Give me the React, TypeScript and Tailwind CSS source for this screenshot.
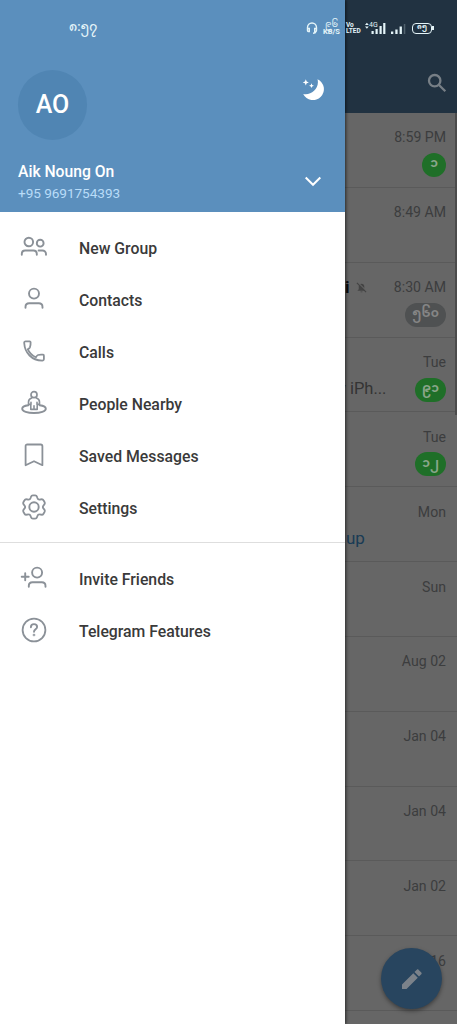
import type { ReactNode } from "react";

interface IconProps {
  children: ReactNode;
}

function MenuIcon({ children }: IconProps) {
  return (
    <svg
      className="h-7 w-7 shrink-0"
      viewBox="0 0 28 28"
      fill="none"
      stroke="#8b9198"
      strokeWidth={1.9}
      strokeLinecap="round"
      strokeLinejoin="round"
    >
      {children}
    </svg>
  );
}

const mainItems = [
  {
    label: "New Group",
    icon: (
      <>
        <circle cx="8.8" cy="9" r="4.3" />
        <circle cx="20.2" cy="10.2" r="3.4" />
        <path d="M1.8 21.800v-.8c0-2.100 1.400-3.500 3.400-3.500h8.200c2 0 3.400 1.400 3.400 3.500v.8M18.600 17.500h3.800c2 0 3.600 1.500 3.600 3.500v.8" />
      </>
    ),
  },
  {
    label: "Contacts",
    icon: (
      <>
        <circle cx="14" cy="8.6" r="5" />
        <path d="M5.500 22.800v-.8c0-2.200 1.500-3.700 3.700-3.700h9.600c2.200 0 3.700 1.500 3.700 3.700v.8" />
      </>
    ),
  },
  {
    label: "Calls",
    icon: (
      <path
        d="M5.700 4.300h3.900c.6 0 1 .4 1 1 .1 1.900-.1 3.500-.7 5-.3.700-1 1.300-2.100 2 1.900 3.900 4.300 6.200 8.100 8 .7-1.200 1.300-2 2.100-2.300 1.500-.5 3.200-.5 5-.3.600.1.900.5.900 1v3.200c0 1.100-.7 1.800-1.800 1.700C11.800 23.300 4.900 16.200 4.200 6c-.1-1 .5-1.700 1.500-1.700z"
        strokeWidth={1.8}
      />
    ),
  },
  {
    label: "People Nearby",
    icon: (
      <>
        <circle cx="14" cy="5.7" r="3" strokeWidth={1.7} />
        <path
          d="M11.700 8.900c-1.900.5-3.200 2-3.200 4v2.500h2.300v5h6.400v-5h2.300v-2.500c0-2-1.300-3.500-3.200-4M11 15.400v-2.200M17 15.400v-2.200M14 16.800v3.600"
          strokeWidth={1.6}
        />
        <path d="M8.300 16.300c-3.700.5-6.100 1.700-6.100 3.400 0 2.600 5.300 4.300 11.800 4.300s11.800-1.700 11.800-4.300c0-1.700-2.400-2.900-6.100-3.400" />
      </>
    ),
  },
  {
    label: "Saved Messages",
    icon: (
      <path
        d="M7.300 3.500h13.400c1 0 1.700.7 1.700 1.700v19L14 20.200l-8.400 4v-19c0-1 .7-1.700 1.700-1.700z"
        strokeWidth={1.8}
      />
    ),
  },
  {
    label: "Settings",
    icon: (
      <>
        <circle cx="14" cy="14" r="4.7" />
        <path
          d="M10.900 4c.3-1 1-1.600 2-1.600h2.200c1 0 1.700.6 2 1.600l.3 1c.4 1.200 1.500 1.800 2.700 1.500l1-.2c1-.2 1.900.1 2.400 1l1 1.700c.5.900.4 1.800-.3 2.600l-.6.700c-.8.900-.8 2.500 0 3.400l.6.700c.7.800.8 1.700.3 2.600l-1 1.700c-.5.900-1.400 1.200-2.400 1l-1-.2c-1.200-.3-2.300.3-2.700 1.500l-.3 1c-.3 1-1 1.600-2 1.600h-2.200c-1 0-1.700-.6-2-1.600l-.3-1c-.4-1.200-1.500-1.800-2.700-1.500l-1 .2c-1 .2-1.900-.1-2.400-1l-1-1.700c-.5-.9-.4-1.800.3-2.600l.6-.7c.8-.9.8-2.500 0-3.400l-.6-.7c-.7-.8-.8-1.700-.3-2.600l1-1.700c.5-.9 1.400-1.200 2.400-1l1 .2c1.200.3 2.300-.3 2.700-1.500z"
          strokeWidth={1.8}
        />
      </>
    ),
  },
];

const extraItems = [
  {
    label: "Invite Friends",
    icon: (
      <>
        <circle cx="17.1" cy="8.6" r="5" />
        <path d="M8.800 22.800v-.8c0-2.200 1.500-3.700 3.700-3.700h9.300c2.200 0 3.700 1.500 3.700 3.700v.8" />
        <path d="M1.700 12.700h7M5.200 9.200v7" />
      </>
    ),
  },
  {
    label: "Telegram Features",
    icon: (
      <>
        <circle cx="14" cy="14" r="11.4" strokeWidth={1.8} />
        <path d="M10.900 11.200c0-1.900 1.300-3.100 3.100-3.100s3.100 1.100 3.100 2.800c0 2.300-3.100 2.400-3.100 4.800" />
        <circle cx="14" cy="19" r=".4" />
      </>
    ),
  },
];

interface Chat {
  date: string;
  badge?: string;
  muted?: boolean;
  title?: string;
  message?: string;
  link?: boolean;
}

const chats: Chat[] = [
  { date: "8:59 PM", badge: "၁" },
  { date: "8:49 AM" },
  { date: "8:30 AM", badge: "၅၆၀", muted: true, title: "i" },
  { date: "Tue", badge: "၉၁", message: "y iPh..." },
  { date: "Tue", badge: "၁၂" },
  { date: "Mon", message: "up", link: true },
  { date: "Sun" },
  { date: "Aug 02" },
  { date: "Jan 04" },
  { date: "Jan 04" },
  { date: "Jan 02" },
  { date: "Dec 16" },
];

function MenuRow({ label, icon }: { label: string; icon: ReactNode }) {
  return (
    <li className="flex h-[52px] items-center gap-[31px] pl-5">
      <MenuIcon>{icon}</MenuIcon>
      <span className="pt-[3px] text-[15.8px] font-medium leading-6 text-[#3a3a3a]">{label}</span>
    </li>
  );
}

function ChatRow({ chat }: { chat: Chat }) {
  return (
    <li className="h-[74.85px] border-b border-[#5a5a5a] pr-[11px] pt-[15px]">
      <div className="flex h-5 items-center justify-between">
        <div className="flex items-center gap-[6px]">
          {chat.title && <span className="text-[17px] font-bold text-[#0c0c0c]">{chat.title}</span>}
          {chat.muted && (
            <svg className="h-[11px] w-[11px]" viewBox="0 0 12 12" fill="#444" stroke="#444">
              <path d="M3 8V5a3 3 0 0 1 6 0v3l1.500 1.500h-9zM5 10.300h2v1H5z" stroke="none" />
              <path d="M1.800.3l10 10" stroke="#666" strokeWidth="1.2" />
              <path d="M1 1l10 10" strokeWidth="1.2" />
            </svg>
          )}
        </div>
        <span className="whitespace-nowrap text-[14.1px] text-[#3c3d3e]">{chat.date}</span>
      </div>
      <div className="mt-[5px] flex h-6 items-center justify-between">
        <span
          className={
            chat.link
              ? "ml-px text-[17px] text-[#193b55]"
              : "-ml-[7px] whitespace-nowrap text-[16.5px] text-[#343434]"
          }
        >
          {chat.message}
        </span>
        {chat.badge && (
          <span
            className={`flex h-6 min-w-6 items-center justify-center rounded-full px-[7px] pb-[3px] text-[12.3px] font-bold leading-none ${
              chat.muted ? "bg-[#4f5152] text-[#858585]" : "bg-[#1f6f28] text-[#8aa68b]"
            }`}
          >
            {chat.badge}
          </span>
        )}
      </div>
    </li>
  );
}

function StatusBar() {
  return (
    <div className="absolute inset-x-0 top-0 z-20 flex h-14 items-center text-[#e4f4f8]">
      <span className="ml-[69px] w-[237px] shrink-0 pb-[2px] text-[12.5px] font-medium leading-none">၈:၅၇</span>
      <svg className="h-3 w-3 shrink-0" viewBox="0 0 12 12" fill="none" stroke="currentColor" strokeWidth="1.4">
        <path d="M1.500 8V5.500a4.500 4.500 0 0 1 9 0V8M1.500 6.500h1.800v3H2.200c-.5 0-.7-.4-.7-1zM10.500 6.500H8.700v3h1.100c.5 0 .7-.4.700-1zM10 9.500c-.3 1.200-1.200 1.700-3 1.700" />
      </svg>
      <div className="ml-[5px] flex w-[17px] shrink-0 flex-col items-center">
        <span className="text-[9px] leading-[7px]">၉၆</span>
        <span className="text-[7.5px] font-bold leading-[8px]">KB/S</span>
      </div>
      <div className="ml-[6px] flex w-[15px] shrink-0 flex-col text-[6.5px] font-bold leading-[6.5px]">
        <span>Vo</span>
        <span>LTED</span>
      </div>
      <svg className="ml-[4px] h-4 w-[22px] shrink-0" viewBox="0 0 22 16" fill="currentColor">
        <path d="M0 5L1.900 2.800 3.800 5zM0 6.500l1.900 2.200 1.900-2.200z" />
        <text x="4" y="7" fontSize="7" fontFamily="Roboto">4G</text>
        <path d="M6.500 11h2.200v3H6.500zM10.500 9h2.200v5h-2.200zM14.500 6h2.200v8h-2.200zM18.200 3h2.200v11h-2.200z" />
      </svg>
      <svg className="ml-1 h-4 w-[15px] shrink-0" viewBox="0 0 15 16" fill="currentColor">
        <path d="M0 11.500h2.300V14H0zM4.300 9.500h2.300V14H4.300zM8.600 6.500h2.300V14H8.600z" />
        <path d="M12.800 4h1.500v10h-1.500z" opacity=".25" />
      </svg>
      <div className="ml-[6px] flex h-[11px] w-5 shrink-0 items-center justify-center rounded-[4px] border-[1.5px] border-current pb-[2px] text-[7px] font-bold leading-none">
        ၈၅
      </div>
      <div className="h-1 w-[1.5px] bg-current" />
    </div>
  );
}

export default function App() {
  return (
    <div className="relative flex h-[1024px] w-[457px] overflow-hidden bg-[#666] font-['Roboto','Noto_Sans_Myanmar',sans-serif]">
      {/* Drawer */}
      <aside className="z-10 flex w-[345px] shrink-0 flex-col bg-white shadow-[1px_0_3px_rgba(0,0,0,0.6)]">
        <header className="flex h-[212px] flex-col bg-[#5b8fbd] pl-[18px] pr-5 pt-[70px]">
          <div className="flex items-start justify-between">
            <div className="flex h-[70px] w-[69px] items-center justify-center rounded-full bg-[#5085b3] text-[25px] font-medium text-white">
              AO
            </div>
            <svg className="mt-[7px] h-6 w-6" viewBox="0 0 24 24" fill="#fff">
              <path d="M16.500 2.200A10.900 10.900 0 1 1 2.200 16.900C9.500 19 19 11.500 16.500 2.200z" />
              <path d="M4.800 2.300l.9 2.200 2.200.9-2.200.9-.9 2.200-.9-2.200-2.200-.9 2.200-.9zM10.500 6.300l.7 1.700 1.700.7-1.700.7-.7 1.700-.7-1.700-1.700-.7 1.700-.7z" />
            </svg>
          </div>
          <div className="mt-[21px] flex items-center justify-between">
            <div className="flex flex-col">
              <span className="text-[15.7px] font-medium leading-[22px] text-white">Aik Noung On</span>
              <span className="text-[13.6px] leading-[21px] tracking-[-0.05px] text-[#b9dcf8]">+95 9691754393</span>
            </div>
            <svg className="mb-[2px] mr-1 h-4 w-4" viewBox="0 0 16 16" fill="none" stroke="#fff" strokeWidth="2">
              <path d="M.7 3.500L8 10.800l7.300-7.300" />
            </svg>
          </div>
        </header>
        <nav>
          <ul className="border-b border-[#dedede] pb-[9px] pt-[9px]">
            {mainItems.map((item) => (
              <MenuRow key={item.label} label={item.label} icon={item.icon} />
            ))}
          </ul>
          <ul className="pt-[9px]">
            {extraItems.map((item) => (
              <MenuRow key={item.label} label={item.label} icon={item.icon} />
            ))}
          </ul>
        </nav>
      </aside>

      {/* Dimmed chat list */}
      <main className="flex w-28 shrink-0 flex-col">
        <header className="flex h-[113px] items-end justify-end bg-[#213241] pb-5 pr-[10px]">
          <svg className="h-5 w-5" viewBox="0 0 20 20" fill="none" stroke="#777f86" strokeWidth="2.3">
            <circle cx="7.7" cy="7.7" r="5.7" />
            <path d="M12 12l6.300 6.300" />
          </svg>
        </header>
        <ul>
          {chats.map((chat, i) => (
            <ChatRow key={i} chat={chat} />
          ))}
        </ul>
      </main>

      <div className="absolute right-0 top-[113px] h-[302px] w-0.5 bg-[#4b4b4b]" />
      <button className="absolute bottom-[15px] right-[15px] flex h-[61px] w-[61px] items-center justify-center rounded-full bg-[#28455f] shadow-[0_2px_4px_rgba(0,0,0,0.4)]">
        <svg className="h-6 w-6" viewBox="0 0 24 24" fill="#7b828a">
          <path d="M2 17.500V22h4.500L17.800 10.700l-4.500-4.500zM21.300 7.200c.5-.5.5-1.200 0-1.700l-2.800-2.800c-.5-.5-1.200-.5-1.700 0l-2.300 2.300 4.500 4.500z" />
        </svg>
      </button>
      <StatusBar />
    </div>
  );
}
